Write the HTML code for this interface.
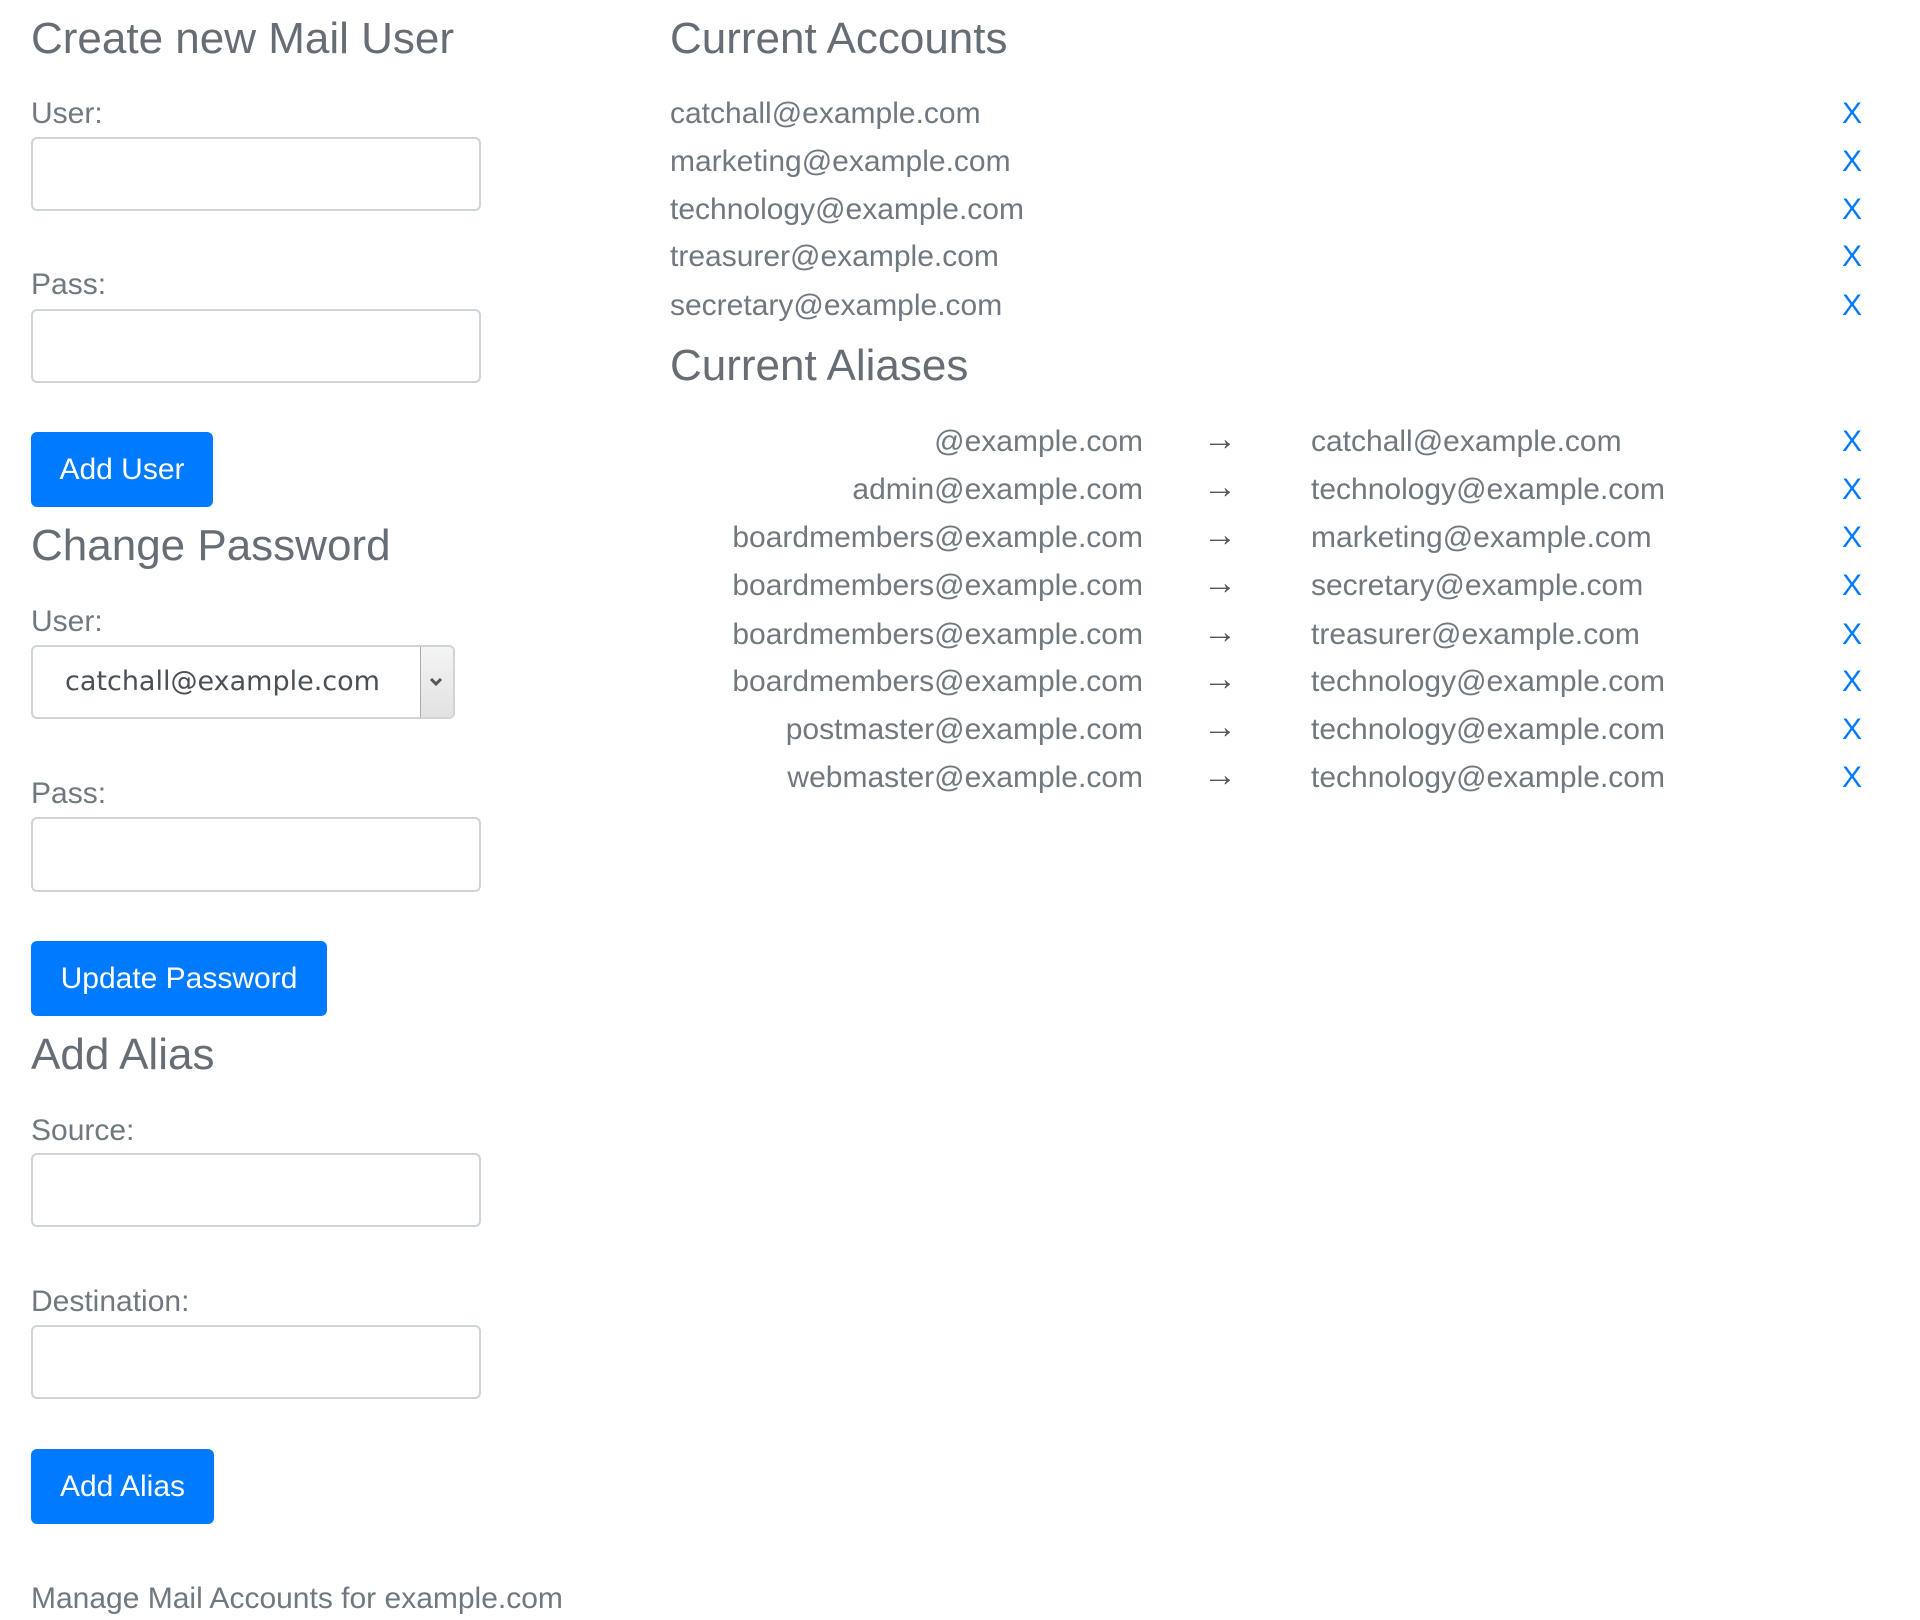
<!DOCTYPE html>
<html><head><meta charset="utf-8"><style>
html,body{margin:0;padding:0;background:#fff;width:1920px;height:1620px;overflow:hidden;font-family:"Liberation Sans",sans-serif;color:#707880}
.a{position:absolute;white-space:nowrap}
.h{font-size:44px;color:#666d74;height:60px;line-height:60px}
.t{font-size:30px;height:40px;line-height:40px}
.inp{position:absolute;left:31px;width:450px;border:2px solid #ced4da;border-radius:6px;box-sizing:border-box;background:#fff}
.btn{position:absolute;left:31px;background:#007bff;color:#fff;border-radius:6px;font-size:30px;text-align:center}
.x{color:#007bff;left:1840px;width:24px;text-align:center}
.src{right:777px;text-align:right}
.arr{left:1203px;width:30px;text-align:center;color:#555;font-size:34px;margin-top:-3px}
.dst{left:1311px}
</style></head><body>
<div class="a h" style="left:31px;top:9px">Create new Mail User</div>
<div class="a t" style="left:31px;top:94px">User:</div>
<div class="inp" style="top:137px;height:74px"></div>
<div class="a t" style="left:31px;top:265px">Pass:</div>
<div class="inp" style="top:309px;height:74px"></div>
<div class="btn" style="top:432px;height:75px;width:182px;line-height:75px">Add User</div>
<div class="a h" style="left:31px;top:516px">Change Password</div>
<div class="a t" style="left:31px;top:602px">User:</div>
<div class="inp" style="top:645px;height:74px;width:424px"></div>
<div class="a" style="left:65px;top:645px;height:74px;line-height:74px;font-family:'DejaVu Sans',sans-serif;font-size:27px;color:#495057">catchall@example.com</div>
<div class="a" style="left:420px;top:647px;width:32px;height:70px;background:linear-gradient(#f4f4f4,#e2e2e2);border-left:1px solid #aaa;border-radius:0 4px 4px 0"></div>
<svg class="a" style="left:428px;top:676px" width="16" height="12"><path d="M3 3 L8 8 L13 3" stroke="#555" stroke-width="3" fill="none"/></svg>
<div class="a t" style="left:31px;top:774px">Pass:</div>
<div class="inp" style="top:817px;height:75px"></div>
<div class="btn" style="top:941px;height:75px;width:296px;line-height:75px">Update Password</div>
<div class="a h" style="left:31px;top:1025px">Add Alias</div>
<div class="a t" style="left:31px;top:1111px">Source:</div>
<div class="inp" style="top:1153px;height:74px"></div>
<div class="a t" style="left:31px;top:1282px">Destination:</div>
<div class="inp" style="top:1325px;height:74px"></div>
<div class="btn" style="top:1449px;height:75px;width:183px;line-height:75px">Add Alias</div>
<div class="a t" style="left:31px;top:1579px">Manage Mail Accounts for example.com</div>

<div class="a h" style="left:670px;top:9px">Current Accounts</div>
<div class="a t" style="left:670px;top:94px">catchall@example.com</div><div class="a t x" style="top:94px">X</div>
<div class="a t" style="left:670px;top:142px">marketing@example.com</div><div class="a t x" style="top:142px">X</div>
<div class="a t" style="left:670px;top:190px">technology@example.com</div><div class="a t x" style="top:190px">X</div>
<div class="a t" style="left:670px;top:237px">treasurer@example.com</div><div class="a t x" style="top:237px">X</div>
<div class="a t" style="left:670px;top:286px">secretary@example.com</div><div class="a t x" style="top:286px">X</div>
<div class="a h" style="left:670px;top:336px">Current Aliases</div>

<div class="a t src" style="top:422px">@example.com</div><div class="a t arr" style="top:422px">→</div><div class="a t dst" style="top:422px">catchall@example.com</div><div class="a t x" style="top:422px">X</div>
<div class="a t src" style="top:470px">admin@example.com</div><div class="a t arr" style="top:470px">→</div><div class="a t dst" style="top:470px">technology@example.com</div><div class="a t x" style="top:470px">X</div>
<div class="a t src" style="top:518px">boardmembers@example.com</div><div class="a t arr" style="top:518px">→</div><div class="a t dst" style="top:518px">marketing@example.com</div><div class="a t x" style="top:518px">X</div>
<div class="a t src" style="top:566px">boardmembers@example.com</div><div class="a t arr" style="top:566px">→</div><div class="a t dst" style="top:566px">secretary@example.com</div><div class="a t x" style="top:566px">X</div>
<div class="a t src" style="top:615px">boardmembers@example.com</div><div class="a t arr" style="top:615px">→</div><div class="a t dst" style="top:615px">treasurer@example.com</div><div class="a t x" style="top:615px">X</div>
<div class="a t src" style="top:662px">boardmembers@example.com</div><div class="a t arr" style="top:662px">→</div><div class="a t dst" style="top:662px">technology@example.com</div><div class="a t x" style="top:662px">X</div>
<div class="a t src" style="top:710px">postmaster@example.com</div><div class="a t arr" style="top:710px">→</div><div class="a t dst" style="top:710px">technology@example.com</div><div class="a t x" style="top:710px">X</div>
<div class="a t src" style="top:758px">webmaster@example.com</div><div class="a t arr" style="top:758px">→</div><div class="a t dst" style="top:758px">technology@example.com</div><div class="a t x" style="top:758px">X</div>
</body></html>
